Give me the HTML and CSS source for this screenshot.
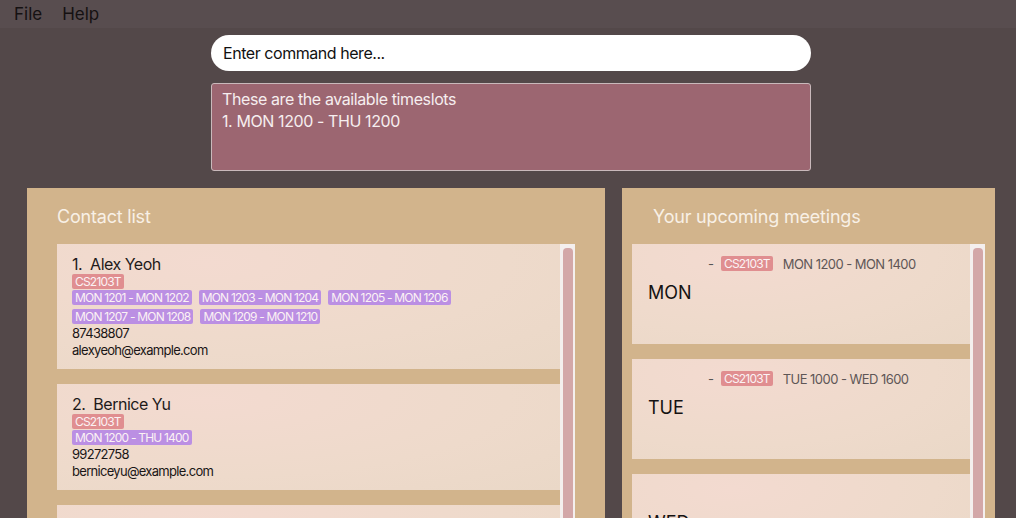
FILE: index.html
```html
<!DOCTYPE html>
<html>
<head>
<meta charset="utf-8">
<link rel="stylesheet" href="styles.css">
</head>
<body>
<div class="menubar"><span class="menu-item">File</span><span class="menu-item">Help</span></div>
<div class="command">Enter command here...</div>
<div class="result">These are the available timeslots<br>1. MON 1200 - THU 1200</div>
<div class="panels">
  <section class="panel panel-left">
    <h2 class="panel-title">Contact list</h2>
    <div class="list">
      <div class="cards">
        <div class="card person">
          <div class="name">1.&nbsp; Alex Yeoh</div>
          <div class="tags"><span class="tag red">CS2103T</span></div>
          <div class="tags"><span class="tag purple">MON 1201 - MON 1202</span><span class="tag purple">MON 1203 - MON 1204</span><span class="tag purple">MON 1205 - MON 1206</span><span class="tag purple">MON 1207 - MON 1208</span><span class="tag purple">MON 1209 - MON 1210</span></div>
          <div class="detail">87438807</div>
          <div class="detail">alexyeoh@example.com</div>
        </div>
        <div class="card person">
          <div class="name">2.&nbsp; Bernice Yu</div>
          <div class="tags"><span class="tag red">CS2103T</span></div>
          <div class="tags"><span class="tag purple">MON 1200 - THU 1400</span></div>
          <div class="detail">99272758</div>
          <div class="detail">berniceyu@example.com</div>
        </div>
        <div class="card person"></div>
      </div>
      <div class="scrollbar"><div class="thumb"></div></div>
    </div>
  </section>
  <section class="panel panel-right">
    <h2 class="panel-title">Your upcoming meetings</h2>
    <div class="list">
      <div class="cards">
        <div class="card meeting">
          <div class="meet-row"><span class="dash">-</span><span class="tag red">CS2103T</span><span class="time">MON 1200 - MON 1400</span></div>
          <div class="day">MON</div>
        </div>
        <div class="card meeting">
          <div class="meet-row"><span class="dash">-</span><span class="tag red">CS2103T</span><span class="time">TUE 1000 - WED 1600</span></div>
          <div class="day">TUE</div>
        </div>
        <div class="card meeting">
          <div class="meet-row"></div>
          <div class="day">WED</div>
        </div>
      </div>
      <div class="scrollbar"><div class="thumb"></div></div>
    </div>
  </section>
</div>
</body>
</html>
```
FILE: styles.css
```css
html, body {
  margin: 0;
  padding: 0;
  height: 100%;
  overflow: hidden;
}
body {
  background: #534849;
  font-family: Inter, "Noto Sans", sans-serif;
}
.menubar {
  height: 28px;
  background: #584d4f;
  display: flex;
  align-items: center;
  padding-left: 14px;
  gap: 20px;
}
.menu-item {
  font-size: 17px;
  color: #151112;
}
.command {
  width: 600px;
  height: 36px;
  box-sizing: border-box;
  margin: 7px 0 0 211px;
  background: #fff;
  border-radius: 18px;
  padding-left: 12px;
  display: flex;
  align-items: center;
  font-size: 16px;
  color: #111;
  letter-spacing: -0.45px;
}
.result {
  width: 600px;
  height: 88px;
  box-sizing: border-box;
  margin: 12px 0 0 211px;
  background: #9c6671;
  border: 1px solid #c9b9bb;
  border-radius: 3px;
  padding: 4px 10px;
  color: #f6eeef;
  font-size: 16px;
  line-height: 22px;
  letter-spacing: -0.4px;
}
.panels {
  display: flex;
  gap: 17px;
  margin-top: 17px;
  padding-left: 27px;
}
.panel {
  background: #d2b48c;
  height: 340px;
  box-sizing: border-box;
  display: flex;
  flex-direction: column;
}
.panel-left {
  width: 578px;
  padding: 0 30px;
}
.panel-right {
  width: 373px;
  padding: 0 10px;
}
.panel-title {
  margin: 0;
  height: 56px;
  display: flex;
  align-items: center;
  font-size: 18px;
  font-weight: 400;
  color: #f8f0e6;
  letter-spacing: -0.2px;
}
.panel-right .panel-title {
  padding-left: 21px;
}
.list {
  display: flex;
  flex: 1;
  min-height: 0;
}
.cards {
  flex: 1;
  display: flex;
  flex-direction: column;
  gap: 15px;
}
.card {
  background: radial-gradient(ellipse at 30% 15%, #f3dad0 0%, #eedacb 60%, #ead8c7 100%);
  box-sizing: border-box;
  flex-shrink: 0;
}
.person {
  padding: 10px 15px 11px;
}
.person:nth-child(1) { height: 125px; }
.person:nth-child(2) { height: 106px; }
.person:nth-child(3) { height: 120px; }
.name {
  font-size: 16px;
  line-height: 20px;
  color: #1e1a1a;
  letter-spacing: -0.5px;
}
.tags {
  display: flex;
  flex-wrap: wrap;
  column-gap: 7px;
  row-gap: 4px;
  margin-bottom: 1px;
}
.tag {
  font-size: 12px;
  line-height: 15px;
  padding: 0 3px;
  border-radius: 2px;
  color: #fbf2f4;
  letter-spacing: -0.8px;
}
.red { background: #e08e90; }
.purple { background: #bb8fe3; }
.detail {
  font-size: 13px;
  line-height: 17px;
  color: #1a1616;
  letter-spacing: -0.7px;
}
.meeting {
  height: 100px;
  padding: 12px 0 0 76px;
}
.meet-row {
  display: flex;
  align-items: center;
  gap: 7px;
  height: 15px;
}
.dash {
  font-size: 13px;
  color: #555;
}
.time {
  font-size: 13px;
  color: #5e5656;
  margin-left: 3px;
  letter-spacing: -0.55px;
}
.day {
  margin: 11px 0 0 -60px;
  font-size: 18px;
  color: #151212;
}
.scrollbar {
  width: 15px;
  background: #f4efee;
  box-sizing: border-box;
  padding: 4px 2px 0 3px;
}
.thumb {
  background: #d3a7a8;
  border-radius: 4px 4px 0 0;
  height: 400px;
}
```
